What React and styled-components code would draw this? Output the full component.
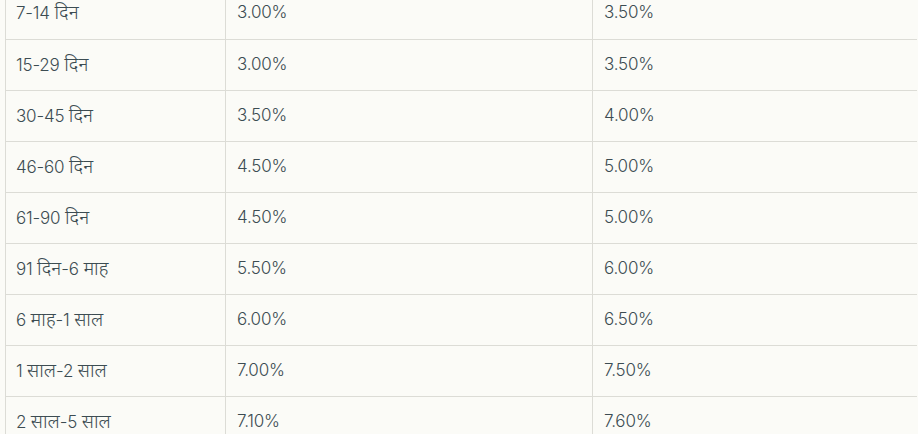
import React from "react";
import styled, { createGlobalStyle } from "styled-components";

const Global = createGlobalStyle`
  html, body { margin: 0; padding: 0; background: #fbfbf7; overflow: hidden; }
  body { font-family: Inter, "Noto Sans", sans-serif; }
`;

const Wrap = styled.div`
  padding: 0 2px 0 5px;
  margin-top: -12px;
`;

const Table = styled.table`
  width: 911px;
  border-collapse: collapse;
  table-layout: fixed;
  background: #fbfbf7;
`;

const Row = styled.tr`
  height: 51px;
`;

const Cell = styled.td`
  width: ${(p) => p.$w}px;
  padding: 0 0 2px ${(p) => p.$pl}px;
  border-left: 1px solid #dcdcd6;
  border-bottom: 1px solid #dcdcd6;
  color: #3c4c52;
  font-size: 17px;
  font-weight: 300;
  letter-spacing: -0.2px;
  vertical-align: middle;
  box-sizing: border-box;
  white-space: nowrap;
`;

const Deva = styled.span`
  font-size: 19px;
  letter-spacing: 0;
`;

function Label({ text }) {
  const parts = text.split(/([\u0900-\u097F]+)/).filter(Boolean);
  return parts.map((p, i) =>
    /[\u0900-\u097F]/.test(p) ? (
      <Deva key={i}>{p}</Deva>
    ) : (
      <React.Fragment key={i}>{p}</React.Fragment>
    )
  );
}

const rows = [
  ["7-14 दिन", "3.00%", "3.50%"],
  ["15-29 दिन", "3.00%", "3.50%"],
  ["30-45 दिन", "3.50%", "4.00%"],
  ["46-60 दिन", "4.50%", "5.00%"],
  ["61-90 दिन", "4.50%", "5.00%"],
  ["91 दिन-6 माह", "5.50%", "6.00%"],
  ["6 माह-1 साल", "6.00%", "6.50%"],
  ["1 साल-2 साल", "7.00%", "7.50%"],
  ["2 साल-5 साल", "7.10%", "7.60%"],
];

export default function App() {
  return (
    <>
      <Global />
      <Wrap>
        <Table>
          <tbody>
            {rows.map((r) => (
              <Row key={r[0]}>
                <Cell $w={220} $pl={10}><Label text={r[0]} /></Cell>
                <Cell $w={367} $pl={11}>{r[1]}</Cell>
                <Cell $w={324} $pl={11}>{r[2]}</Cell>
              </Row>
            ))}
          </tbody>
        </Table>
      </Wrap>
    </>
  );
}
